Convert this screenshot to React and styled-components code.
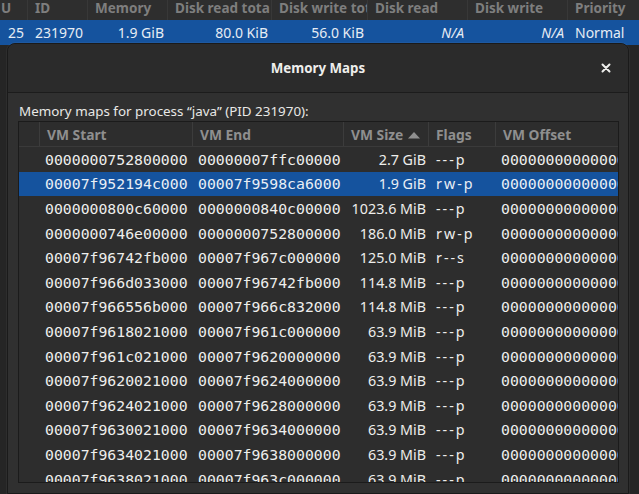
import React from 'react'
import styled, { createGlobalStyle } from 'styled-components'

const GlobalStyle = createGlobalStyle`
    html, body {
        margin: 0;
        padding: 0;
        background: #252525;
        overflow: hidden;
    }
    body {
        font-family: "Noto Sans", "Open Sans", sans-serif;
        color: #eeeeec;
    }
`;

const parentColumns = [
    { title: 'U', width: 28 },
    { title: 'ID', width: 60 },
    { title: 'Memory', width: 80 },
    { title: 'Disk read tota', width: 104 },
    { title: 'Disk write tota', width: 96 },
    { title: 'Disk read', width: 100 },
    { title: 'Disk write', width: 100 },
    { title: 'Priority', width: 80 },
];

const parentRow = [
    { value: '25', align: 'right' },
    { value: '231970' },
    { value: '1.9 GiB', align: 'right' },
    { value: '80.0 KiB', align: 'right' },
    { value: '56.0 KiB', align: 'right' },
    { value: 'N/A', align: 'right', italic: true },
    { value: 'N/A', align: 'right', italic: true },
    { value: 'Normal' },
];

const maps = [
    ['0000000752800000', '00000007ffc00000', '2.7 GiB', '---p'],
    ['00007f952194c000', '00007f9598ca6000', '1.9 GiB', 'rw-p'],
    ['0000000800c60000', '0000000840c00000', '1023.6 MiB', '---p'],
    ['0000000746e00000', '0000000752800000', '186.0 MiB', 'rw-p'],
    ['00007f96742fb000', '00007f967c000000', '125.0 MiB', 'r--s'],
    ['00007f966d033000', '00007f96742fb000', '114.8 MiB', '---p'],
    ['00007f966556b000', '00007f966c832000', '114.8 MiB', '---p'],
    ['00007f9618021000', '00007f961c000000', '63.9 MiB', '---p'],
    ['00007f961c021000', '00007f9620000000', '63.9 MiB', '---p'],
    ['00007f9620021000', '00007f9624000000', '63.9 MiB', '---p'],
    ['00007f9624021000', '00007f9628000000', '63.9 MiB', '---p'],
    ['00007f9630021000', '00007f9634000000', '63.9 MiB', '---p'],
    ['00007f9634021000', '00007f9638000000', '63.9 MiB', '---p'],
    ['00007f9638021000', '00007f963c000000', '63.9 MiB', '---p'],
];

const selectedIndex = 1;

export default function App() {
    const template = parentColumns.map((c) => `${c.width}px`).join(' ');

    return (
        <>
            <GlobalStyle />
            <Screen>
                <ParentTable>
                    <ParentHeader style={{ gridTemplateColumns: template }}>
                        {parentColumns.map((col) => (
                            <ParentHeadCell key={col.title}>{col.title}</ParentHeadCell>
                        ))}
                    </ParentHeader>
                    <ParentRow style={{ gridTemplateColumns: template }}>
                        {parentRow.map((cell, i) => (
                            <ParentCell key={i} $align={cell.align} $italic={cell.italic}>
                                {cell.value}
                            </ParentCell>
                        ))}
                    </ParentRow>
                </ParentTable>

                <Dialog>
                    <TitleBar>
                        <Title>Memory Maps</Title>
                        <CloseButton aria-label="close">
                            <svg width="10" height="10" viewBox="0 0 10 10">
                                <path d="M1.5 1.5 L8.5 8.5 M8.5 1.5 L1.5 8.5" stroke="#eeeeec" strokeWidth="2" strokeLinecap="round" />
                            </svg>
                        </CloseButton>
                    </TitleBar>
                    <Body>
                        <Label>Memory maps for process “java” (PID 231970):</Label>
                        <MapTable>
                            <MapHeader>
                                <HeadCell />
                                <HeadCell>VM Start</HeadCell>
                                <HeadCell>VM End</HeadCell>
                                <HeadCell>
                                    VM Size
                                    <SortArrow viewBox="0 0 12 8" width="12" height="8">
                                        <path d="M0 7.5 L6 1 L12 7.5 Z" fill="#8f8f8f" />
                                    </SortArrow>
                                </HeadCell>
                                <HeadCell>Flags</HeadCell>
                                <HeadCell>VM Offset</HeadCell>
                            </MapHeader>
                            <Rows>
                                {maps.map((row, i) => (
                                    <MapRow key={i} $selected={i === selectedIndex}>
                                        <Cell />
                                        <MonoCell>{row[0]}</MonoCell>
                                        <MonoCell>{row[1]}</MonoCell>
                                        <SizeCell>{row[2]}</SizeCell>
                                        <FlagCell>{row[3]}</FlagCell>
                                        <MonoCell>0000000000000000</MonoCell>
                                    </MapRow>
                                ))}
                            </Rows>
                        </MapTable>
                    </Body>
                </Dialog>
            </Screen>
        </>
    );
}

const Screen = styled.div`
    position: relative;
    width: 639px;
    height: 494px;
    overflow: hidden;
    background: #252525;
`;

const ParentTable = styled.div`
    display: flex;
    flex-direction: column;
    background: #2d2d2d;
`;

const ParentHeader = styled.div`
    display: grid;
    height: 20px;
    background: #2e2e2e;
`;

const ParentHeadCell = styled.div`
    padding: 0 0 0 7px;
    font-size: 13.5px;
    font-weight: 700;
    line-height: 16px;
    color: #7e7e7e;
    white-space: nowrap;
    overflow: hidden;
    border-right: 1px solid #383838;
    &:first-child {
        padding: 0 1px;
    }
`;

const ParentRow = styled.div`
    display: grid;
    height: 25px;
    align-items: center;
    background: #15539e;
    color: #e6ecf4;
`;

const ParentCell = styled.div`
    padding: 0 4px 0 7px;
    font-size: 14px;
    font-style: ${(p) => (p.$italic ? 'italic' : 'normal')};
    text-align: ${(p) => p.$align || 'left'};
    white-space: nowrap;
    overflow: hidden;
`;

const Dialog = styled.div`
    position: absolute;
    left: 7px;
    top: 43px;
    width: 620px;
    height: 449px;
    display: flex;
    flex-direction: column;
    background: #303030;
    border: 1px solid #1a1a1a;
    border-radius: 8px 8px 0 0;
    box-shadow: 0 0 0 1px rgba(255, 255, 255, 0.04);
`;

const TitleBar = styled.div`
    position: relative;
    height: 48px;
    flex: none;
    display: flex;
    align-items: center;
    justify-content: center;
    background: #2b2b2b;
    border-bottom: 1px solid #1c1c1c;
    border-radius: 8px 8px 0 0;
`;

const Title = styled.div`
    font-size: 13.3px;
    font-weight: 700;
    color: #eeeeec;
`;

const CloseButton = styled.div`
    position: absolute;
    right: 17px;
    top: 19px;
    width: 10px;
    height: 10px;
    display: flex;
`;

const Body = styled.div`
    flex: 1;
    display: flex;
    flex-direction: column;
    padding: 9px 9px 10px 10px;
    min-height: 0;
`;

const Label = styled.div`
    font-size: 13.4px;
    line-height: 19px;
    color: #e8e8e6;
    padding-left: 1px;
`;

const MapTable = styled.div`
    flex: 1;
    min-height: 0;
    display: flex;
    flex-direction: column;
    background: #2d2d2d;
    border: 1px solid #1b1b1b;
    overflow: hidden;
`;

const columns = '21px 153px 151px 85px 67px 1fr';

const MapHeader = styled.div`
    display: grid;
    grid-template-columns: ${columns};
    height: 24px;
    flex: none;
    border-bottom: 1px solid #3a3a3a;
`;

const HeadCell = styled.div`
    display: flex;
    align-items: center;
    gap: 5px;
    padding-left: 7px;
    font-size: 13.8px;
    font-weight: 700;
    color: #8f8f8f;
    white-space: nowrap;
    border-right: 1px solid #3c3c3c;
    &:last-child {
        border-right: none;
    }
`;

const SortArrow = styled.svg`
    margin-top: 1px;
`;

const Rows = styled.div`
    flex: 1;
    overflow: hidden;
`;

const MapRow = styled.div`
    display: grid;
    grid-template-columns: ${columns};
    height: 24.6px;
    align-items: center;
    background: ${(p) => (p.$selected ? '#15539e' : 'transparent')};
    color: ${(p) => (p.$selected ? '#e9eef5' : '#eeeeec')};
`;

const Cell = styled.div`
    white-space: nowrap;
    overflow: hidden;
`;

const MonoCell = styled(Cell)`
    padding-left: 5px;
    font-family: "DejaVu Sans Mono", monospace;
    font-size: 14.8px;
`;

const SizeCell = styled(Cell)`
    text-align: right;
    padding-right: 3px;
    font-size: 14.3px;
`;

const FlagCell = styled(Cell)`
    padding-left: 7px;
    font-size: 14.3px;
    letter-spacing: 2px;
`;
